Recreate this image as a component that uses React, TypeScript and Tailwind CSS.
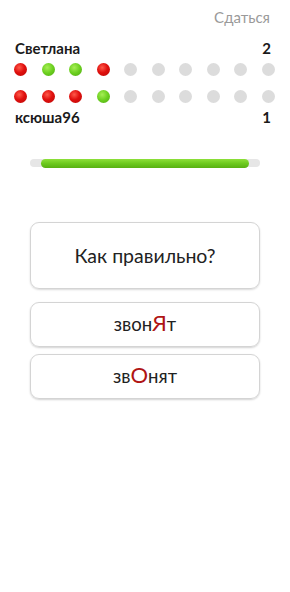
import React from "react";

const R = "bg-[radial-gradient(circle_at_40%_35%,#ff5a4a_0%,#e0100e_45%,#b80806_100%)]";
const G = "bg-[radial-gradient(circle_at_40%_35%,#a6ee55_0%,#6bcf1f_50%,#4fa812_100%)]";
const N = "bg-[#dcdcdc]";

function Dot({ c }: { c: "r" | "g" | "n" }) {
  const cls = c === "r" ? R : c === "g" ? G : N;
  return <div className={`w-[13px] h-[13px] rounded-full ${cls}`} />;
}

function Row({ items }: { items: ("r" | "g" | "n")[] }) {
  return (
    <div className="flex justify-between">
      {items.map((c, i) => (
        <Dot key={i} c={c} />
      ))}
    </div>
  );
}

export default function App() {
  const row1: ("r" | "g" | "n")[] = ["r", "g", "g", "r", "n", "n", "n", "n", "n", "n"];
  const row2: ("r" | "g" | "n")[] = ["r", "r", "r", "g", "n", "n", "n", "n", "n", "n"];
  return (
    <div className="w-[290px] h-[592px] bg-white font-['Lato','Noto_Sans',sans-serif] text-[#1a1a1a]">
      <div className="flex justify-end pr-[20px] pt-[7px] h-[20px]">
        <span className="text-[15px] leading-[20px] text-[#9a9a9a]">Сдаться</span>
      </div>
      <div className="pl-[14px] pr-[15px] pt-[19px]">
        <div className="flex justify-between text-[15px] leading-[18px] font-bold px-[1px]">
          <span>Светлана</span>
          <span className="pr-[3px]">2</span>
        </div>
        <div className="mt-[6px]">
          <Row items={row1} />
        </div>
        <div className="mt-[14px]">
          <Row items={row2} />
        </div>
        <div className="flex justify-between text-[15px] leading-[18px] font-bold px-[1px] mt-[5px]">
          <span>ксюша96</span>
          <span className="pr-[3px]">1</span>
        </div>
      </div>
      <div className="px-[30px] mt-[33px]">
        <div className="h-[8px] rounded-full bg-[#e6e6e6] flex items-center px-[11px]">
          <div className="h-[9px] w-full rounded-full bg-[linear-gradient(to_bottom,#8ee03a_0%,#6cc91e_50%,#58b012_100%)]" />
        </div>
      </div>
      <div className="px-[30px] mt-[55px] flex flex-col">
        <div className="h-[67px] rounded-[9px] border border-[#d4d4d4] shadow-[0_1px_2px_rgba(0,0,0,0.15)] flex items-center justify-center text-[19.5px] text-[#222]">
          Как правильно?
        </div>
        <div className="mt-[13px] h-[45px] rounded-[9px] border border-[#d4d4d4] shadow-[0_1px_2px_rgba(0,0,0,0.18)] flex items-center justify-center text-[18.5px] text-[#222]">
          <span>
            звон<span className="text-[#b01414] text-[22px] leading-none">Я</span>т
          </span>
        </div>
        <div className="mt-[7px] h-[45px] rounded-[9px] border border-[#d4d4d4] shadow-[0_1px_2px_rgba(0,0,0,0.18)] flex items-center justify-center text-[18.5px] text-[#222]">
          <span>
            зв<span className="text-[#b01414] text-[22px] leading-none">О</span>нят
          </span>
        </div>
      </div>
    </div>
  );
}
